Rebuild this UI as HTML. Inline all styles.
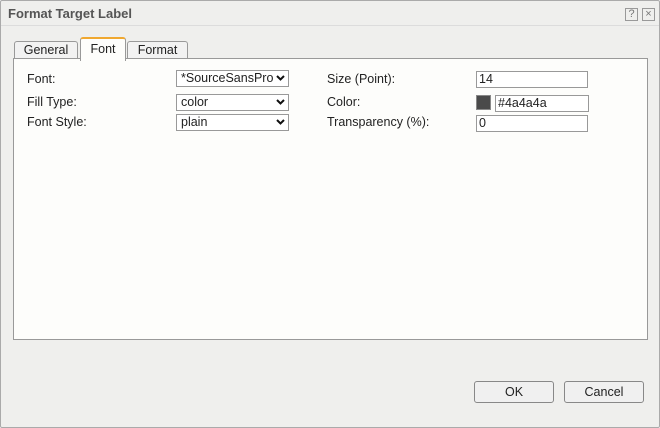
<!DOCTYPE html>
<html><head><style>
body{margin:0;width:660px;height:428px;background:#fff;font-family:"Liberation Sans",Verdana,sans-serif;font-size:12.5px;color:#222;position:relative;overflow:hidden}
.dlg{position:absolute;left:0;top:0;width:658px;height:426px;border:1px solid #aaa;background:#efefed;border-radius:2px}
.title{position:absolute;left:7px;top:5px;font-weight:bold;font-size:13px;color:#555}
.hl{position:absolute;left:0;top:24px;width:658px;height:1px;background:#dcdcdc}
.ib{position:absolute;top:7px;width:11px;height:11px;border:1px solid #999;font-size:11px;line-height:11px;text-align:center;color:#777}
.tab{position:absolute;border:1px solid #999;border-bottom:none;background:#f2f2f2;text-align:center;line-height:17px;border-radius:3px 3px 0 0}
.panel{position:absolute;left:13px;top:58px;width:633px;height:280px;border:1px solid #999;background:#fdfdfb}
.l{position:absolute}
.box{position:absolute;height:15px;border:1px solid #999;background:#fff;line-height:15px;padding-left:4px;box-sizing:content-box}
.arr{position:absolute;right:3px;top:4px;width:9px;height:6px}
.btn{position:absolute;top:381px;width:78px;height:20px;border:1px solid #888;border-radius:3px;background:#f0f0f0;text-align:center;line-height:20px}
</style></head><body>
<div class="dlg">
<div class="title">Format Target Label</div>
<div class="ib" style="left:624px">?</div>
<div class="ib" style="left:641px">×</div>
<div class="hl"></div>
</div>
<div class="tab" style="left:14px;top:41px;width:62px;height:17px">General</div>
<div class="tab" style="left:127px;top:41px;width:59px;height:17px">Format</div>
<div class="panel"></div>
<div class="tab" style="left:80px;top:37px;width:44px;height:22px;background:#fdfdfb;border-top:2px solid #f0a830;line-height:20px;z-index:2">Font</div>
<div class="l" style="left:27px;top:72px">Font:</div>
<div class="l" style="left:27px;top:95px">Fill Type:</div>
<div class="l" style="left:27px;top:115px">Font Style:</div>
<div class="box" style="left:176px;top:70px;width:107px;overflow:hidden">*SourceSansPro<svg class="arr" viewBox="0 0 9 6" style="background:#fff"><path d="M1 1L4.5 4.5L8 1" stroke="#111" stroke-width="2" fill="none"/></svg></div>
<div class="box" style="left:176px;top:94px;width:107px">color<svg class="arr" viewBox="0 0 9 6"><path d="M1 1L4.5 4.5L8 1" stroke="#111" stroke-width="2" fill="none"/></svg></div>
<div class="box" style="left:176px;top:114px;width:107px">plain<svg class="arr" viewBox="0 0 9 6"><path d="M1 1L4.5 4.5L8 1" stroke="#111" stroke-width="2" fill="none"/></svg></div>
<div class="l" style="left:327px;top:72px">Size (Point):</div>
<div class="l" style="left:327px;top:95px">Color:</div>
<div class="l" style="left:327px;top:115px">Transparency (%):</div>
<div class="box" style="left:476px;top:71px;width:108px;padding-left:2px">14</div>
<div style="position:absolute;left:476px;top:95px;width:13px;height:13px;border:1px solid #888;background:#4a4a4a"></div>
<div class="box" style="left:495px;top:95px;width:90px;padding-left:2px">#4a4a4a</div>
<div class="box" style="left:476px;top:115px;width:108px;padding-left:2px">0</div>
<div class="btn" style="left:474px">OK</div>
<div class="btn" style="left:564px">Cancel</div>
</body></html>
